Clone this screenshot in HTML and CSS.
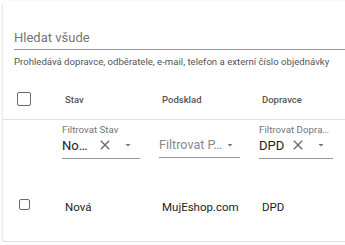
FILE: index.html
```html
<!DOCTYPE html>
<html lang="cs">
<head>
  <meta charset="UTF-8">
  <meta name="viewport" content="width=device-width, initial-scale=1.0">
  <title>Objednávky</title>
  <link rel="stylesheet" href="styles.css">
</head>
<body>
  <div class="paper">
    <div class="search">
      <div class="search-field">Hledat všude</div>
      <p class="helper">Prohledává dopravce, odběratele, e-mail, telefon a externí číslo objednávky</p>
    </div>

    <div class="grid-row head">
      <div class="cell check"><span class="checkbox"></span></div>
      <div class="cell">Stav</div>
      <div class="cell">Podsklad</div>
      <div class="cell">Dopravce</div>
    </div>

    <div class="grid-row filters">
      <div class="cell check"></div>
      <div class="cell">
        <div class="filter filter-stav">
          <span class="filter-label">Filtrovat Stav</span>
          <div class="filter-input">
            <span class="filter-value">No…</span>
            <svg class="clear" viewBox="0 0 24 24"><path d="M19 6.41L17.59 5 12 10.59 6.41 5 5 6.41 10.59 12 5 17.59 6.41 19 12 13.41 17.59 19 19 17.59 13.41 12z"/></svg>
            <svg class="drop" viewBox="0 0 24 24"><path d="M7 10l5 5 5-5z"/></svg>
          </div>
        </div>
      </div>
      <div class="cell">
        <div class="filter filter-podsklad">
          <span class="filter-label"></span>
          <div class="filter-input">
            <span class="filter-value placeholder">Filtrovat P…</span>
            <svg class="drop" viewBox="0 0 24 24"><path d="M7 10l5 5 5-5z"/></svg>
          </div>
        </div>
      </div>
      <div class="cell">
        <div class="filter filter-dopravce">
          <span class="filter-label">Filtrovat Dopra…</span>
          <div class="filter-input">
            <span class="filter-value">DPD</span>
            <svg class="clear" viewBox="0 0 24 24"><path d="M19 6.41L17.59 5 12 10.59 6.41 5 5 6.41 10.59 12 5 17.59 6.41 19 12 13.41 17.59 19 19 17.59 13.41 12z"/></svg>
            <svg class="drop" viewBox="0 0 24 24"><path d="M7 10l5 5 5-5z"/></svg>
          </div>
        </div>
      </div>
    </div>

    <div class="grid-row data">
      <div class="cell check"><span class="checkbox small"></span></div>
      <div class="cell">Nová</div>
      <div class="cell">MujEshop.com</div>
      <div class="cell">DPD</div>
    </div>
  </div>
</body>
</html>
```

FILE: styles.css
```css
body {
  margin: 0;
  padding: 1px 0 0 3px;
  background-color: #ffffff;
  font-family: Roboto, "Noto Sans", sans-serif;
  overflow: hidden;
}

.paper {
  width: 420px;
  background-color: #ffffff;
  border-radius: 4px;
  box-shadow: 0 1px 3px rgba(0, 0, 0, 0.2), 0 1px 1px rgba(0, 0, 0, 0.14), 0 2px 1px -1px rgba(0, 0, 0, 0.12);
}

.search {
  padding-left: 11px;
}

.search-field {
  padding: 29px 0 4px;
  font-size: 13px;
  line-height: 15px;
  color: #757575;
  border-bottom: 1px solid #949494;
}

.helper {
  margin: 6px 0 0;
  font-size: 9.6px;
  line-height: 11px;
  color: #555555;
  white-space: nowrap;
}

.grid-row {
  display: grid;
  grid-template-columns: 59px 97px 100px 100px 1fr;
  border-bottom: 1px solid #e0e0e0;
}

.cell {
  padding-left: 3px;
}

.head {
  margin-top: 12px;
  height: 40px;
  align-items: center;
  font-size: 9.5px;
  font-weight: 500;
  color: #555555;
}

.filters {
  height: 50px;
  border-bottom: none;
  align-items: start;
}

.filters .cell {
  padding-left: 0;
}

.data {
  height: 71px;
  align-items: center;
  font-size: 11.5px;
  line-height: 14px;
  color: #222222;
}

.data .cell {
  padding-top: 3px;
}

.check {
  padding-left: 14px;
}

.data .check {
  padding: 0 0 0 16px;
  margin-top: -3px;
}

.checkbox {
  display: block;
  width: 14px;
  height: 14px;
  box-sizing: border-box;
  border: 1.6px solid #6b6b6b;
  border-radius: 2px;
}

.checkbox.small {
  width: 11px;
  height: 11px;
  border-width: 1.3px;
}

.filter {
  display: flex;
  flex-direction: column;
  padding-top: 4px;
}

.filter-stav {
  width: 78px;
}

.filter-podsklad {
  width: 81px;
}

.filter-dopravce {
  width: 74px;
}

.filter-label {
  height: 11px;
  font-size: 9.75px;
  line-height: 11px;
  color: #757575;
  white-space: nowrap;
}

.filter-input {
  display: flex;
  align-items: center;
  margin-top: 2px;
  padding: 0 6px 5px 0;
  border-bottom: 1px solid #949494;
}

.filter-podsklad .filter-input {
  padding-right: 4px;
}

.filter-value {
  flex: 1 0 auto;
  font-size: 13px;
  line-height: 15px;
  color: #222222;
  white-space: nowrap;
}

.filter-value.placeholder {
  font-size: 12.6px;
  color: #8a8a8a;
}

.clear {
  width: 16px;
  height: 16px;
  margin: 0 9px 0 1px;
  fill: #6b6b6b;
}

.drop {
  flex: none;
  width: 12px;
  height: 12px;
  fill: #757575;
}
```
